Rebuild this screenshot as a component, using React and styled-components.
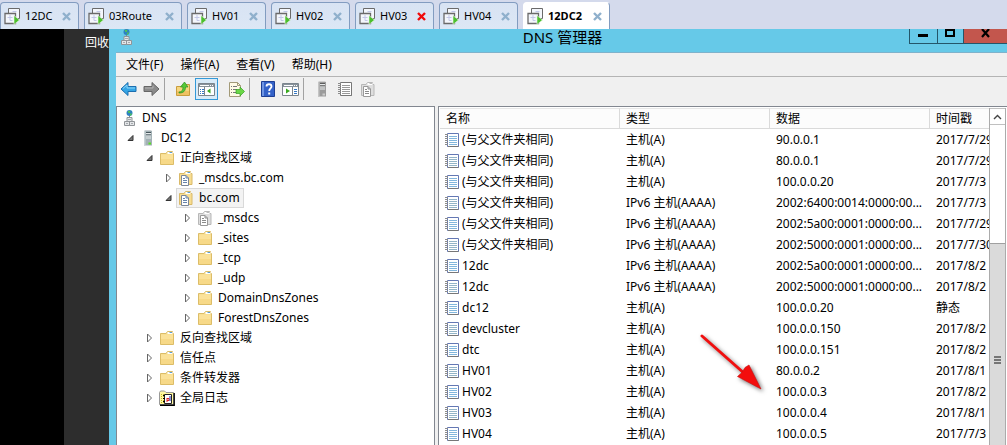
import React from "react";
import styled, { createGlobalStyle, css } from "styled-components";

const GlobalStyle = createGlobalStyle`
  * { box-sizing: border-box; }
  html, body { margin: 0; height: 100%; overflow: hidden; }
  body {
    font-family: "Noto Sans", "Noto Sans CJK SC", sans-serif;
    font-size: 12px;
    line-height: 16px;
    color: #000;
    background: #000;
  }
  button { margin: 0; padding: 0; border: 0; background: none; font: inherit; color: inherit; }
  svg { display: block; flex: none; }
`;

const Page = styled.div`
  display: flex;
  flex-direction: column;
  height: 100vh;
  overflow: hidden;
`;

/* machine tabs */
const TabStrip = styled.nav`
  display: flex;
  gap: 5px;
  height: 29px;
  flex: none;
  padding-top: 2px;
  background: #d4daec;
`;

const Tab = styled.div`
  display: flex;
  align-items: center;
  width: ${(p) => p.$width}px;
  padding: 0 7px 0 3px;
  border: 1px solid #829cc0;
  border-bottom: 0;
  border-radius: 4px 4px 0 0;
  background: linear-gradient(#d8e3f3, #dce7f5);
  ${(p) =>
    p.$active &&
    css`
      background: #fff;
      border-left-color: #fff;
      border-top-color: #fff;
      font-weight: 700;
    `}
`;

const TabName = styled.button`
  display: flex;
  align-items: center;
  flex: 1;
  gap: 4px;
  font-size: 11px;
  white-space: nowrap;
`;

/* desktop and console window */
const Desktop = styled.div`
  display: flex;
  flex: 1;
  min-height: 0;
`;

const Backdrop = styled.div`
  width: 109px;
  flex: none;
  padding: 6px 0 0 21px;
  border-left: 64px solid #000;
  background: #2d2d2d;
  color: #fff;
  white-space: nowrap;
  overflow: hidden;
`;

const Window = styled.main`
  display: flex;
  flex-direction: column;
  flex: 1;
  min-width: 0;
  padding-left: 7px;
  background: #66c9e8;
`;

const TitleBar = styled.header`
  display: grid;
  grid-template-columns: 1fr auto 1fr;
  height: 24px;
  flex: none;
  padding-left: 2px;
  border-bottom: 1px solid #7fb2cb;
`;

const Title = styled.h1`
  margin: 0;
  font-size: 15px;
  font-weight: 400;
  line-height: 16px;
`;

const Caption = styled.div`
  display: flex;
  justify-content: flex-end;
  height: 15px;
`;

const CaptionButton = styled.button`
  display: flex;
  justify-content: center;
  width: ${(p) => p.$width}px;
  border-left: 1px solid #24566a;
  border-bottom: 1px solid #24566a;
  background: ${(p) => (p.$close ? "#c3564d" : "transparent")};
`;

const MenuBar = styled.nav`
  display: flex;
  gap: 17px;
  height: 24px;
  flex: none;
  padding: 3px 10px;
  background: #f0f0f0;
  border-bottom: 1px solid #b4b4b4;
`;

const MenuItem = styled.button`
  white-space: nowrap;
`;

const ToolBar = styled.div`
  display: flex;
  align-items: flex-start;
  height: 29px;
  flex: none;
  padding: 1px;
  background: #f0f0f0;
`;

const ToolGroup = styled.div`
  display: flex;
  gap: ${(p) => p.$gap || 0}px;
  margin-right: ${(p) => p.$after || 0}px;
`;

const Tool = styled.button`
  display: flex;
  align-items: center;
  justify-content: center;
  width: 23px;
  height: 22px;
  ${(p) =>
    p.$pressed &&
    css`
      border: 1px solid #3399d8;
      background: #d9ebf8;
    `}
`;

const Divider = styled.div`
  width: 1px;
  height: 22px;
  margin: 0 6px 0 1px;
  background: #a2a2a2;
`;

const Panes = styled.div`
  display: flex;
  flex: 1;
  gap: 3px;
  min-height: 0;
  background: #f0f0f0;
`;

const TreePane = styled.section`
  width: 319px;
  flex: none;
  padding: 1px 0;
  border: 1px solid #828790;
  border-bottom: 0;
  background: #fff;
  overflow: hidden;
`;

const TreeRow = styled.div`
  display: flex;
  align-items: center;
  gap: 1px;
  height: 20px;
  padding-left: ${(p) => (p.$root ? 2 : 8 + 19 * p.$level)}px;
`;

const Toggle = styled.button`
  display: flex;
  align-items: center;
  width: 12px;
  height: 16px;
`;

const Node = styled.span`
  display: flex;
  align-items: center;
  gap: 5px;
  height: 20px;
  padding: 0 3px 0 1px;
  border: 1px solid transparent;
  white-space: nowrap;
  ${(p) =>
    p.$selected &&
    css`
      border-color: #d9d9d9;
      background: #f3f3f3;
    `}
`;

const ListPane = styled.section`
  position: relative;
  display: flex;
  flex: 1;
  min-width: 0;
  padding: 1px 1px 0;
  border: 1px solid #828790;
  border-width: 1px 0 0 1px;
  background: #fff;
  overflow: hidden;
`;

const TableWrap = styled.div`
  flex: 1;
  min-width: 0;
  overflow: hidden;
`;

const Records = styled.table`
  width: 100%;
  table-layout: fixed;
  border-collapse: separate;
  border-spacing: 0;
  th, td {
    padding: 0 0 0 6px;
    text-align: left;
    font-weight: 400;
    white-space: nowrap;
    overflow: hidden;
  }
  th {
    height: 21px;
    border-top: 1px solid #e6e6e6;
    border-bottom: 1px solid #dadada;
    border-right: 1px solid #dadada;
    background: #fcfcfc;
  }
  th:last-child { border-right: 0; }
  td { height: 21px; }
  td:first-child { padding-left: 5px; }
`;

const RecordName = styled.span`
  display: flex;
  align-items: center;
  gap: 3px;
`;

const ScrollBar = styled.div`
  display: flex;
  flex-direction: column;
  width: 17px;
  flex: none;
  border: 1px solid #ababab;
  border-width: 0 1px;
  background: #fff;
`;

const ScrollUp = styled.button`
  display: flex;
  align-items: center;
  justify-content: center;
  height: 17px;
  flex: none;
  border: 1px solid #c0c0c0;
  border-width: 1px 0;
`;

const Thumb = styled.div`
  display: flex;
  justify-content: center;
  flex: 1;
  margin-top: 118px;
  padding-top: 112px;
  border-top: 1px solid #a0a0a0;
  background: #dadada;
`;

const Pointer = styled.svg`
  position: absolute;
  left: 256px;
  top: 222px;
  filter: drop-shadow(2px 2px 2px rgba(0, 0, 0, 0.55));
`;

/* icons */
const MachineIcon = () => (
  <svg width="17" height="18" viewBox="0 0 17 18">
    <path d="M4.500 1.500h11v10h-11z" fill="#f4f7fc" stroke="#6a6a6a" />
    <path d="M8.500 1.500" />
    <path d="M1 6.500h10.500v10H1z" fill="#f4f7fc" stroke="#6a6a6a" strokeWidth="1.300" />
    <path d="M3.500 10.500h5M6 8v5.500h2.500M8.500 4.500h4" fill="none" stroke="#c3c8e8" />
    <path d="M10 8.500v9l5.500-4.500z" fill="#4cbf2e" stroke="#e8f6e0" strokeWidth=".6" />
  </svg>
);

const CloseIcon = ({ color }) => (
  <svg width="9" height="9" viewBox="0 0 9 9">
    <path d="M1 1l7 7M8 1l-7 7" stroke={color} strokeWidth="2.400" />
  </svg>
);

const DnsIcon = () => (
  <svg width="16" height="16" viewBox="0 0 16 16">
    <circle cx="8.500" cy="3" r="3" fill="#2d7fc4" />
    <path d="M6.500 1.500l2-1 1 1.500-1.500 1.500zM9 4l2-1-.5 2-1.500 1z" fill="#4fc553" />
    <path d="M8.500 6v2" stroke="#888" />
    <g fill="#e4e6e8" stroke="#909498">
      <path d="M6 7.500h5v4H6zM3.500 11.500h5v4h-5zM8.500 11.500h5v4h-5z" />
    </g>
    <path d="M7 9.500h3M5 13.500h2M10 13.500h2" stroke="#a4a9ae" />
  </svg>
);

const ServerIcon = ({ light = "#59df24", dim }) => (
  <svg width="16" height="16" viewBox="0 0 16 16">
    <path d="M4 1l1-1h7l-1 1z" fill={dim ? "#d0d0d0" : "#c9ced1"} />
    <path d="M4 1h8v14.500H4z" fill={dim ? "#9c9c9c" : "#a3b1b5"} />
    <path d="M4 1h1.500v14.500H4z" fill={dim ? "#c4c4c4" : "#c9d3d6"} />
    <path d="M6 2.500h5M6 5h5" stroke={dim ? "#5c5c5c" : "#46555b"} />
    <path d="M6 3.500h5M6 6h5M6 8h5" stroke="#e6eaeb" />
    <path d="M8.500 12.500h2.500v2H8.500z" fill={light} />
  </svg>
);

const FolderIcon = () => (
  <svg width="16" height="16" viewBox="0 0 16 16">
    <path d="M1.500 3.500H7l1.500-2h5v2h1v11h-13z" fill="#f5dc8c" stroke="#dcbd68" />
    <path d="M8.500 2h5v2h-5z" fill="#fff" />
    <path d="M10.500 2.500H13" stroke="#5a9fd0" />
    <path d="M2 4.500h12V14H2z" fill="#fbe29a" />
    <path d="M2 9h12v5H2z" fill="#f7d988" />
  </svg>
);

const ZoneIcon = ({ gray }) => (
  <svg width="16" height="16" viewBox="0 0 16 16">
    <path d="M1.500 3.500H6l1.500-2h5v2h1.500v11H1.500z" fill={gray ? "#dedede" : "#f8dd91"} stroke={gray ? "#b8b8b8" : "#d9b968"} />
    <path d="M7.500 2h5v2h-5z" fill="#fff" />
    <path d="M9.500 2.500H12" stroke={gray ? "#bbb" : "#5a9fd0"} />
    <path d="M3.500 5.500h4.500l2.500 2.500v7.500h-7z" fill="#fff" stroke={gray ? "#999" : "#7b8698"} />
    <path d="M8 5.500V8h2.500M5 8.500h2M5 10.500h4M5 12.500h4" fill="none" stroke={gray ? "#8a8a8a" : "#6684ac"} />
  </svg>
);

const LogIcon = () => (
  <svg width="16" height="16" viewBox="0 0 16 16">
    <path d="M.5 14.500v-12l1-1.500h4l1.500 1.500h7.500v12z" fill="#fff8a0" stroke="#999" />
    <path d="M15.200 3v12.200H1" fill="none" stroke="#000" strokeWidth="1.400" />
    <path d="M2.500 4v10M4.500 4v10" stroke="#c4b420" strokeDasharray="1 1" />
    <path d="M5.500 4.500h7v9h-7z" fill="#fff" stroke="#222" />
    <path d="M4 5.500h2M4 8.500h2M4 11.500h2" stroke="#000" />
    <path d="M8 8v4M8 8.500h2v2H8" fill="none" stroke="#e02020" />
    <path d="M11 6v5" fill="none" stroke="#1626b5" />
  </svg>
);

const RecordIcon = ({ gray, alt }) => (
  <svg width="14" height="16" viewBox="0 0 14 16">
    <path d="M2.500 1.500h11v13h-11z" fill="#fff" stroke={gray ? "#777" : "#6478b4"} />
    <path d="M3 14.500h10.500" stroke="#777" />
    <path
      d="M4 4.500h8M4 6.500h8M4 8.500h8M4 10.500h8M4 12.500h8"
      stroke={gray ? "#999" : alt ? "#93b5c8" : "#82b7dd"}
    />
    <path d="M0 2.500h3M0 4.500h3M0 6.500h3M0 8.500h3M0 10.500h3M0 12.500h3" stroke="#8c8c8c" />
  </svg>
);

const ArrowIcon = ({ forward }) => (
  <svg width="17" height="16" viewBox="0 0 17 16">
    <path
      d={forward ? "M16 8l-7-6.500v4H1v5h8v4z" : "M1 8l7-6.500v4h8v5H8v4z"}
      fill={forward ? "#8b8b8b" : "#35a5e5"}
      stroke={forward ? "#666" : "#1c6eaf"}
    />
    <path d={forward ? "M2 7h8V4.500" : "M3 7.500l4-3.500v3h8"} fill="none" stroke={forward ? "#b3b3b3" : "#8bd5f8"} />
  </svg>
);

const UpIcon = () => (
  <svg width="16" height="16" viewBox="0 0 16 16">
    <path d="M1.500 5.500h5l1.500-2h6.500v11h-13z" fill="#f6d67e" stroke="#c99d3e" />
    <path d="M2 10h12v4H2z" fill="#efc262" />
    <path d="M4 11c3 0 4-2 4-5H5.500L9.500 1 13 6h-2.500c0 4-2 6-6.500 6z" fill="#55c838" stroke="#2f8f20" strokeWidth=".7" />
  </svg>
);

const TreeToggleIcon = () => (
  <svg width="17" height="15" viewBox="0 0 17 15">
    <path d="M.5 1.500h16v12H.5z" fill="#fff" stroke="#7b858d" />
    <path d="M1 2h15v3H1z" fill="#89939b" />
    <path d="M2 3.500h9M12 3.500h1M14 3.500h1" stroke="#fff" />
    <path d="M6.500 5v8" stroke="#7b858d" />
    <path d="M2 7.500h1M4 7.500h2M2 9.500h1M4 9.500h2M2 11.500h1M4 11.500h2" stroke="#3578c4" />
    <path d="M12.500 6.500v5L9 9z" fill="#39a91e" />
  </svg>
);

const ExportIcon = () => (
  <svg width="17" height="17" viewBox="0 0 17 17">
    <path d="M1.500 1.500h8l3 3v11h-11z" fill="#fffbe6" stroke="#a39a78" />
    <path d="M9.500 1.500v3h3" fill="none" stroke="#a39a78" />
    <path d="M3 5.500h1M5 5.500h4M3 8.500h1M5 8.500h4M3 11.500h1M5 11.500h4" stroke="#777" />
    <path d="M8 8.500h4V6l4.500 4.500L12 15v-2.500H8z" fill="#6bd747" stroke="#35a021" strokeWidth=".7" />
  </svg>
);

const HelpIcon = () => (
  <svg width="14" height="16" viewBox="0 0 14 16">
    <path d="M.5.500h13v15H.500z" fill="#3462c8" stroke="#1e3f94" />
    <path d="M1 1h2v14H1z" fill="#6f95e3" />
    <path d="M5.500 5.500c0-3 5-3 5 0 0 2-2.300 1.800-2.300 4.500" fill="none" stroke="#fff" strokeWidth="1.800" />
    <path d="M7.200 11.500h2v2h-2z" fill="#fff" />
  </svg>
);

const ActionPaneIcon = () => (
  <svg width="17" height="15" viewBox="0 0 17 15">
    <path d="M.5 1.500h16v12H.5z" fill="#fff" stroke="#7b858d" />
    <path d="M1 2h15v3H1z" fill="#89939b" />
    <path d="M2 3.500h9M12 3.500h1M14 3.500h1" stroke="#fff" />
    <path d="M10.500 5v8" stroke="#7b858d" />
    <path d="M12 7.500h3M12 9.500h3M12 11.500h3" stroke="#3578c4" />
    <path d="M4 6.500v5L8 9z" fill="#39a91e" />
  </svg>
);

const Chevron = ({ open }) => (
  <svg width="12" height="12" viewBox="0 0 12 12">
    {open ? (
      <path d="M8 3.500V8.500H3z" fill="#777" stroke="#333" />
    ) : (
      <path d="M3.500 2l4 4-4 4z" fill="#fff" stroke="#666" />
    )}
  </svg>
);

/* data */
const tabs = [
  ["12DC", 79],
  ["03Route", 98],
  ["HV01", 79],
  ["HV02", 79],
  ["HV03", 79],
  ["HV04", 79],
  ["12DC2", 87],
];

const tree = [
  { name: "DC12", level: 0, open: true, icon: <ServerIcon /> },
  { name: "正向查找区域", level: 1, open: true, icon: <FolderIcon /> },
  { name: "_msdcs.bc.com", level: 2, icon: <ZoneIcon /> },
  { name: "bc.com", level: 2, open: true, selected: true, icon: <ZoneIcon /> },
  { name: "_msdcs", level: 3, icon: <ZoneIcon gray /> },
  { name: "_sites", level: 3, icon: <FolderIcon /> },
  { name: "_tcp", level: 3, icon: <FolderIcon /> },
  { name: "_udp", level: 3, icon: <FolderIcon /> },
  { name: "DomainDnsZones", level: 3, icon: <FolderIcon /> },
  { name: "ForestDnsZones", level: 3, icon: <FolderIcon /> },
  { name: "反向查找区域", level: 1, icon: <FolderIcon /> },
  { name: "信任点", level: 1, icon: <FolderIcon /> },
  { name: "条件转发器", level: 1, icon: <FolderIcon /> },
  { name: "全局日志", level: 1, icon: <LogIcon /> },
];

const PARENT = "(与父文件夹相同)";
const A = "主机(A)";
const AAAA = "IPv6 主机(AAAA)";

const records = [
  [PARENT, A, "90.0.0.1", "2017/7/29"],
  [PARENT, A, "80.0.0.1", "2017/7/29"],
  [PARENT, A, "100.0.0.20", "2017/7/3"],
  [PARENT, AAAA, "2002:6400:0014:0000:00...", "2017/7/3"],
  [PARENT, AAAA, "2002:5a00:0001:0000:00...", "2017/7/29"],
  [PARENT, AAAA, "2002:5000:0001:0000:00...", "2017/7/30"],
  ["12dc", AAAA, "2002:5a00:0001:0000:00...", "2017/8/2"],
  ["12dc", AAAA, "2002:5000:0001:0000:00...", "2017/8/2"],
  ["dc12", A, "100.0.0.20", "静态"],
  ["devcluster", A, "100.0.0.150", "2017/8/2"],
  ["dtc", A, "100.0.0.151", "2017/8/2"],
  ["HV01", A, "80.0.0.2", "2017/8/1"],
  ["HV02", A, "100.0.0.3", "2017/8/2"],
  ["HV03", A, "100.0.0.4", "2017/8/1"],
  ["HV04", A, "100.0.0.5", "2017/7/3"],
];

export default function App() {
  return (
    <Page>
      <GlobalStyle />
      <TabStrip>
        {tabs.map(([name, width]) => (
          <Tab key={name} $width={width} $active={name === "12DC2"}>
            <TabName>
              <MachineIcon />
              {name}
            </TabName>
            <button aria-label={"关闭 " + name}>
              <CloseIcon color={name === "HV03" ? "#f00a0a" : "#8fb0cc"} />
            </button>
          </Tab>
        ))}
      </TabStrip>
      <Desktop>
        <Backdrop>回收</Backdrop>
        <Window>
          <TitleBar>
            <DnsIcon />
            <Title>DNS 管理器</Title>
            <Caption>
              <CaptionButton $width={28} aria-label="最小化">
                <svg width="11" height="14" viewBox="0 0 11 14">
                  <path d="M0 6.500h10" stroke="#000" strokeWidth="3" />
                </svg>
              </CaptionButton>
              <CaptionButton $width={26} aria-label="最大化">
                <svg width="11" height="14" viewBox="0 0 11 14">
                  <path d="M1 1h8v6H1z" fill="none" stroke="#000" strokeWidth="2" />
                </svg>
              </CaptionButton>
              <CaptionButton $width={44} $close aria-label="关闭">
                <svg width="11" height="14" viewBox="0 0 11 14">
                  <path d="M2 0l7 8M9 0L2 8" stroke="#000" strokeWidth="2.200" />
                </svg>
              </CaptionButton>
            </Caption>
          </TitleBar>
          <MenuBar>
            <MenuItem>文件(F)</MenuItem>
            <MenuItem>操作(A)</MenuItem>
            <MenuItem>查看(V)</MenuItem>
            <MenuItem>帮助(H)</MenuItem>
          </MenuBar>
          <ToolBar>
            <ToolGroup>
              <Tool aria-label="后退"><ArrowIcon /></Tool>
              <Tool aria-label="前进"><ArrowIcon forward /></Tool>
            </ToolGroup>
            <Divider />
            <ToolGroup $gap={1} $after={7}>
              <Tool aria-label="向上一级"><UpIcon /></Tool>
              <Tool $pressed aria-label="显示控制台树"><TreeToggleIcon /></Tool>
            </ToolGroup>
            <ToolGroup>
              <Tool aria-label="导出列表"><ExportIcon /></Tool>
            </ToolGroup>
            <Divider />
            <ToolGroup>
              <Tool aria-label="帮助"><HelpIcon /></Tool>
              <Tool aria-label="显示操作窗格"><ActionPaneIcon /></Tool>
            </ToolGroup>
            <Divider />
            <ToolGroup>
              <Tool aria-label="新建服务器"><ServerIcon light="#ccc" dim /></Tool>
              <Tool aria-label="新建记录"><RecordIcon gray /></Tool>
              <Tool aria-label="新建区域"><ZoneIcon gray /></Tool>
            </ToolGroup>
          </ToolBar>
          <Panes>
            <TreePane>
              <TreeRow $root>
                <Node>
                  <DnsIcon />
                  DNS
                </Node>
              </TreeRow>
              {tree.map((n) => (
                <TreeRow key={n.name + n.level} $level={n.level}>
                  <Toggle aria-label={(n.open ? "折叠 " : "展开 ") + n.name}>
                    <Chevron open={n.open} />
                  </Toggle>
                  <Node $selected={n.selected}>
                    {n.icon}
                    {n.name}
                  </Node>
                </TreeRow>
              ))}
            </TreePane>
            <ListPane>
              <TableWrap>
                <Records>
                  <colgroup>
                    <col width="180" />
                    <col width="150" />
                    <col width="160" />
                    <col />
                  </colgroup>
                  <thead>
                    <tr>
                      <th>名称</th>
                      <th>类型</th>
                      <th>数据</th>
                      <th>时间戳</th>
                    </tr>
                  </thead>
                  <tbody>
                    {records.map(([name, type, data, time], i) => (
                      <tr key={i}>
                        <td>
                          <RecordName>
                            <RecordIcon alt={i % 2 === 1} />
                            {name}
                          </RecordName>
                        </td>
                        <td>{type}</td>
                        <td>{data}</td>
                        <td>{time}</td>
                      </tr>
                    ))}
                  </tbody>
                </Records>
              </TableWrap>
              <ScrollBar>
                <ScrollUp aria-label="向上滚动">
                  <svg width="9" height="6" viewBox="0 0 9 6">
                    <path d="M1 5l3.500-3.500L8 5" fill="none" stroke="#444" strokeWidth="1.400" />
                  </svg>
                </ScrollUp>
                <Thumb>
                  <svg width="7" height="8" viewBox="0 0 7 8">
                    <path d="M0 1h7M0 4h7M0 7h7" stroke="#555" strokeWidth="1.600" />
                  </svg>
                </Thumb>
              </ScrollBar>
              <Pointer width="72" height="66" viewBox="0 0 72 66">
                <path d="M7 7l43 38" stroke="#f01010" strokeWidth="3" strokeLinecap="round" />
                <path d="M66 60L42.500 47.500l4.500-4 3-5 4-2.500z" fill="#f30d0d" stroke="#c80f0f" strokeWidth=".6" />
              </Pointer>
            </ListPane>
          </Panes>
        </Window>
      </Desktop>
    </Page>
  );
}
